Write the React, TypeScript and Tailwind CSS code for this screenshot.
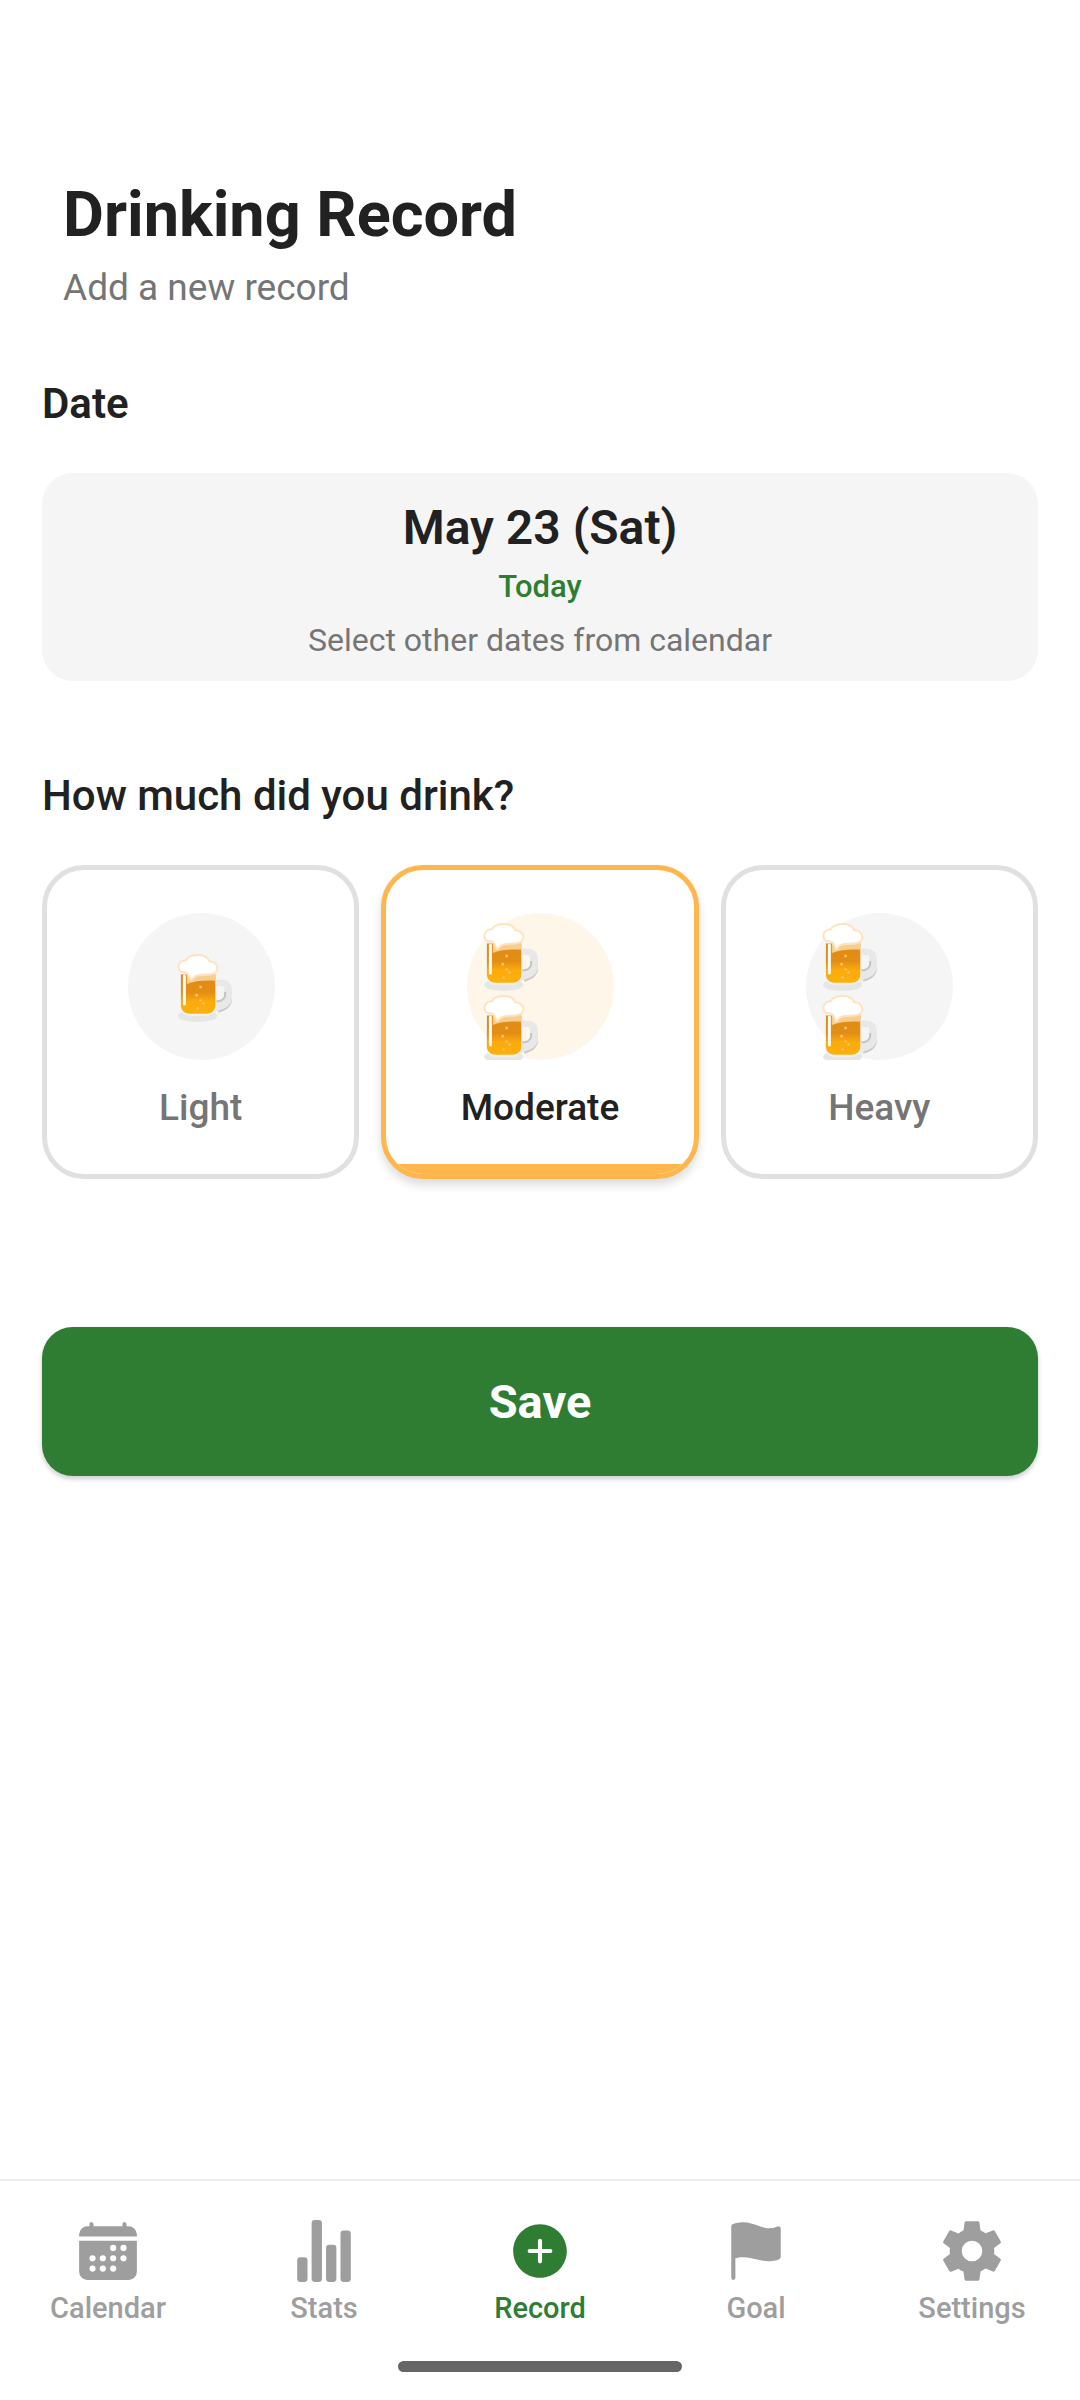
import { IoCalendar, IoStatsChart, IoAddCircle, IoFlag, IoSettingsSharp } from "react-icons/io5";

function BeerMug() {
  return (
    <svg width="55" height="68" viewBox="0 0 56 66" preserveAspectRatio="none" className="shrink-0 block">
      <defs>
        <linearGradient id="beer" x1="0" y1="0" x2="0" y2="1">
          <stop offset="0" stopColor="#e08a14" />
          <stop offset="0.45" stopColor="#e38e13" />
          <stop offset="0.68" stopColor="#fbab0c" />
          <stop offset="1" stopColor="#fdb00a" />
        </linearGradient>
      </defs>
      {/* handle */}
      <path
        fillRule="evenodd"
        d="M38 25h8c6 0 10 4 10 10v7c0 7-6 11-14 13l-4 1zM40 31v14c5 0 8-2 8-6v-6c0-1-1-2-2-2z"
        fill="#e8e8e8"
      />
      <path d="M48 37v2c0 4-3 6-8 6v2c6 0 10-3 10-8v-2z" fill="#c4c4c4" />
      <path d="M42 55c8-2 14-6 14-13v2c0 7-6 11-14 13z" fill="#c8c8c8" />
      {/* base */}
      <ellipse cx="21" cy="60" rx="20" ry="6" fill="#e6e6e6" />
      {/* glass */}
      <path d="M3 18h37v32c0 6-5 10-10 10H13C7 60 3 56 3 50z" fill="#f2f2f2" />
      <path d="M4 20h35v30c0 5-4 8-9 8H13c-5 0-9-3-9-8z" fill="url(#beer)" />
      <path d="M10 20h29v6c-10-1-20 0-29 3z" fill="#f6cf90" />
      <rect x="6" y="20" width="3" height="30" rx="1.5" fill="#ffffff" />
      {/* bubbles */}
      <circle cx="24" cy="32" r="1.4" fill="#f8c27a" />
      <circle cx="20" cy="40" r="1.4" fill="#f8c27a" />
      <circle cx="24" cy="45" r="1.2" fill="#f8c27a" />
      <circle cx="21" cy="53" r="1.2" fill="#f8c27a" />
      <circle cx="27" cy="48" r="1.2" fill="#f8c27a" />
      {/* foam */}
      <path
        d="M2 15C0 10 4 6 9 6C11 2 17 1 22 1C27 1 31 3 33 7C38 7 42 11 41 15C40 19 35 20 31 20C26 20 21 20 18 22C16 24 15 26 14 25C13 23 12 19 9 18C6 17 3 18 2 15z"
        fill="#ffffff"
        stroke="#ffe3bd"
        strokeWidth="2"
      />
    </svg>
  );
}

function LevelCard({ label, count, selected }: { label: string; count: number; selected?: boolean }) {
  return (
    <div
      className={`flex-1 h-[314px] rounded-[42px] border-[5px] bg-white overflow-hidden flex flex-col items-center pt-[43px] ${
        selected ? "border-[#ffb74d] shadow-[0_6px_10px_rgba(0,0,0,0.14)]" : "border-[#e0e0e0]"
      }`}
    >
      <div className={`ml-[1px] w-[147px] h-[147px] shrink-0 rounded-full ${selected ? "bg-[#fff6ea]" : "bg-[#f5f5f5]"}`}>
        <div
          className={`h-full overflow-hidden flex flex-col gap-[4px] ${
            count === 1 ? "pl-[49px] pt-[41px]" : "pl-[16px] pt-[10px]"
          }`}
        >
          {Array.from({ length: count }).map((_, i) => (
            <BeerMug key={i} />
          ))}
        </div>
      </div>
      <div
        className={`mt-[27px] text-[37px] leading-[42px] font-medium ${
          selected ? "text-[#212121]" : "text-[#757575]"
        }`}
      >
        {label}
      </div>
      {selected && <div className="mt-auto h-[10px] w-full shrink-0 bg-[#ffb74d]" />}
    </div>
  );
}

function NavItem({ icon: Icon, label, active, size = 66 }: { icon: any; label: string; active?: boolean; size?: number }) {
  return (
    <div className={`flex-1 flex flex-col items-center ${active ? "text-[#2e7d32]" : "text-[#9e9e9e]"}`}>
      <div className="h-[66px] flex items-center justify-center">
        <Icon size={size} />
      </div>
      <div className="mt-[8px] text-[29px] leading-[32px] font-medium">{label}</div>
    </div>
  );
}

export default function App() {
  return (
    <div className="w-[1080px] h-[2400px] bg-white flex flex-col font-['Roboto',sans-serif] overflow-hidden">
      <main className="flex-1 px-[42px] pt-[179px]">
        {/* Header */}
        <header className="px-[21px]">
          <h1 className="text-[63px] leading-[72px] font-bold text-[#212121]">Drinking Record</h1>
          <p className="mt-[16px] text-[37px] leading-[42px] text-[#757575]">Add a new record</p>
        </header>

        <h2 className="mt-[72px] text-[42px] leading-[46px] font-semibold text-[#212121]">Date</h2>

        <div className="mt-[46px] h-[208px] rounded-[31px] bg-[#f5f5f5] flex flex-col items-center pt-[27px]">
          <div className="text-[48px] leading-[56px] font-semibold text-[#212121]">May 23 (Sat)</div>
          <div className="mt-[13px] text-[31px] leading-[36px] font-medium text-[#2e7d32]">Today</div>
          <div className="mt-[17px] text-[32px] leading-[36px] text-[#757575]">Select other dates from calendar</div>
        </div>

        <h2 className="mt-[90px] text-[42px] leading-[50px] font-medium text-[#212121]">How much did you drink?</h2>

        <div className="mt-[44px] flex gap-[22px]">
          <LevelCard label="Light" count={1} />
          <LevelCard label="Moderate" count={2} selected />
          <LevelCard label="Heavy" count={2} />
        </div>

        <button className="mt-[148px] w-full h-[149px] pt-[2px] rounded-[31px] bg-[#2e7d32] text-white text-[47px] font-bold shadow-[0_3px_5px_rgba(0,0,0,0.2)]">
          Save
        </button>
      </main>

      {/* Bottom nav */}
      <nav className="h-[221px] border-t-2 border-[#eeeeee] flex flex-col">
        <div className="flex pt-[37px]">
          <NavItem icon={IoCalendar} label="Calendar" />
          <NavItem icon={IoStatsChart} label="Stats" />
          <NavItem icon={IoAddCircle} label="Record" active />
          <NavItem icon={IoFlag} label="Goal" />
          <NavItem icon={IoSettingsSharp} label="Settings" />
        </div>
        <div className="mt-auto mb-[28px] mx-auto w-[284px] h-[11px] rounded-full bg-[#666666]" />
      </nav>
    </div>
  );
}
